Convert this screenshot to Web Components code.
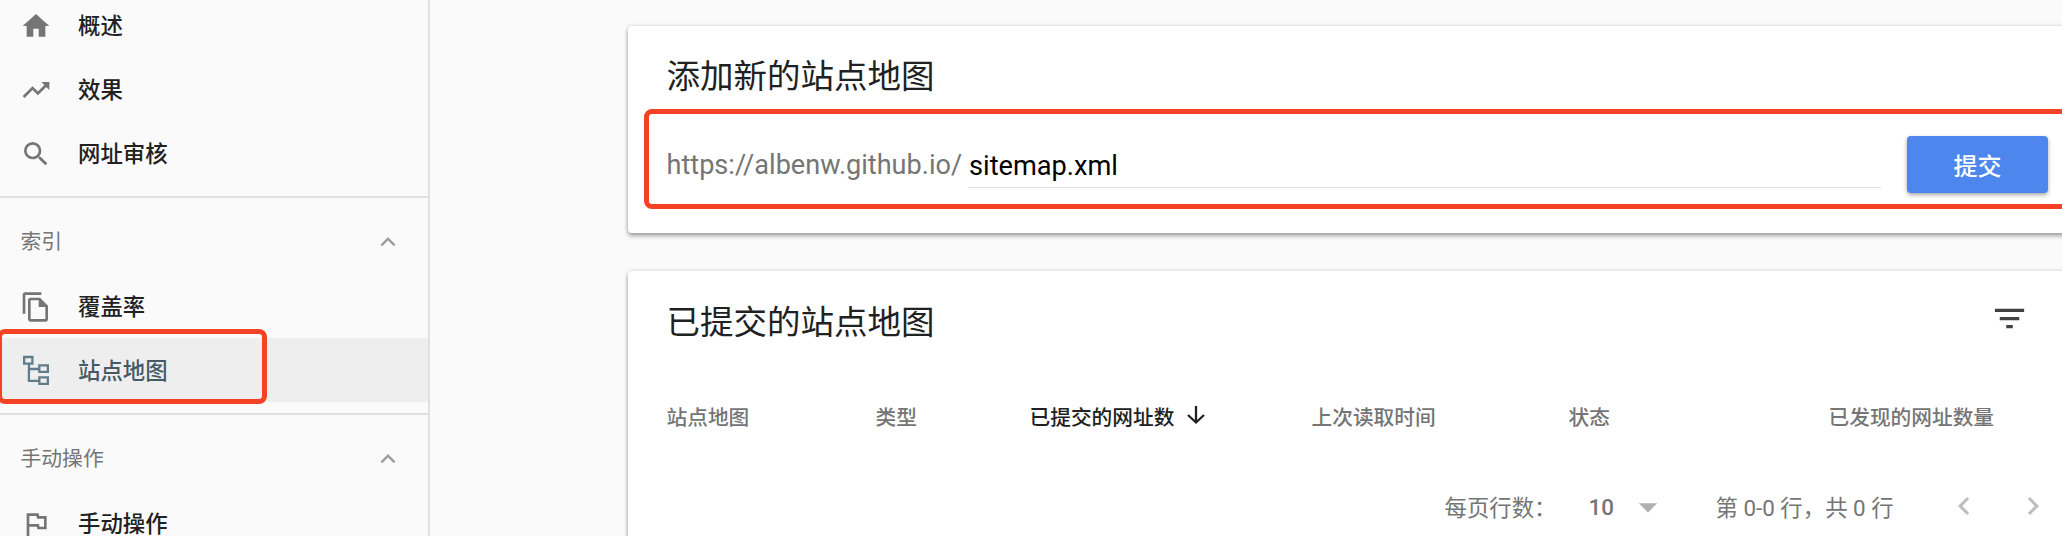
<!DOCTYPE html>
<html lang="zh-CN">
<head>
<meta charset="utf-8">
<title>站点地图</title>
<style>
html, body { margin: 0; height: 100%; overflow: hidden; background: #fafafa; }
body { font-family: Roboto, "Noto Sans CJK SC", sans-serif; color: #212121; }
</style>
</head>
<body>
<console-app></console-app>
<script>
const define = (name, html) => customElements.define(name, class extends HTMLElement {
  constructor() {
    super();
    const t = document.createElement('template');
    t.innerHTML = html;
    this.attachShadow({ mode: 'open' }).append(t.content.cloneNode(true));
  }
});

const ICONS = {
  home: '<path d="M10 20v-6h4v6h5v-8h3L12 3 2 12h3v8z"/>',
  trend: '<path d="M16 6l2.29 2.29-4.88 4.88-4-4L2 16.59 3.41 18l6-6 4 4 6.3-6.29L22 12V6z"/>',
  search: '<path d="M15.5 14h-.79l-.28-.27A6.47 6.47 0 0 0 16 9.5 6.5 6.5 0 1 0 9.5 16c1.61 0 3.09-.59 4.23-1.57l.27.28v.79l5 4.99L20.49 19zm-6 0a4.5 4.5 0 1 1 0-9 4.5 4.5 0 0 1 0 9z"/>',
  copy: '<path d="M16 1H4a2 2 0 0 0-2 2v14h2V3h12zm-1 4H8a2 2 0 0 0-2 2v14c0 1.100.9 2 2 2h11a2 2 0 0 0 2-2V11zM8 21V7h6v5h5v9z"/>',
  tree: '<path d="M3.100 1.500h6.200v5H3.100zM14.500 7.700h6.400v5h-6.400zM14.500 16.700h6.400v5h-6.400zM6.700 6.500v12.900h7.800M6.700 10.500h7.800" fill="none" stroke="currentColor" stroke-width="1.700"/>',
  flag: '<path d="M12.360 6l.4 2H18v6h-3.360l-.4-2H7V6zM14 4H5v17h2v-7h5.600l.4 2h7V6h-5.600z"/>',
  up: '<path d="M12 8l-6 6 1.410 1.410L12 10.830l4.590 4.580L18 14z"/>',
  left: '<path d="M15.410 7.410L14 6l-6 6 6 6 1.410-1.410L10.830 12z"/>',
  right: '<path d="M10 6L8.590 7.410 13.170 12l-4.580 4.590L10 18l6-6z"/>',
  filter: '<path d="M10 18h4v-2h-4zM3 6v2h18V6zm3 7h12v-2H6z"/>',
  down: '<path d="M12 3v16M4 12l8 7.500 8-7.500" fill="none" stroke="currentColor" stroke-width="2.300"/>',
  drop: '<path d="M7 10l5 5 5-5z"/>'
};
customElements.define('ui-icon', class extends HTMLElement {
  constructor() { super(); this.attachShadow({ mode: 'open' }); }
  connectedCallback() {
    this.shadowRoot.innerHTML = `<style>:host{display:block;flex:none;width:32px;height:32px}svg{display:block;width:100%;height:100%;fill:currentColor}</style>
    <svg viewBox="0 0 24 24">${ICONS[this.getAttribute('name')]}</svg>`;
  }
});

define('nav-item', `<style>
  :host { display:flex; align-items:center; height:64px; padding-left:20px; box-sizing:border-box; font-size:22.400px; font-weight:500; line-height:32px; color:#212121; }
  ::slotted(ui-icon) { color:#757575; margin-right:26px; }
  :host([selected]) { background:#eee; color:#455a64; }
  :host([selected]) ::slotted(ui-icon) { color:#607d8b; }
</style><slot name="icon"></slot><slot></slot>`);

define('nav-heading', `<style>
  :host { display:flex; align-items:center; justify-content:space-between; box-sizing:border-box; height:78px; padding:11px 25px 0 20.500px; border-top:2px solid #e0e0e0; font-size:20.800px; line-height:30px; color:#757575; }
  ui-icon { width:30px; height:30px; color:#9e9e9e; }
</style><slot></slot><ui-icon name="up"></ui-icon>`);

define('side-nav', `<style>
  :host { display:flex; flex-direction:column; box-sizing:border-box; width:430px; height:536px; border-right:2px solid #e0e0e0; overflow:hidden; position:relative; }
  .group { flex:none; padding-bottom:10px; }
  .first { margin-top:-6px; }
  .index { padding-bottom:11px; }
  .low { padding-top:2px; }
  .mark { position:absolute; left:-3px; top:329px; width:270px; height:75px; box-sizing:border-box; border:5px solid #f44224; border-radius:8px; }
</style>
<div class="group first">
  <nav-item><ui-icon slot="icon" name="home"></ui-icon>概述</nav-item>
  <nav-item><ui-icon slot="icon" name="trend"></ui-icon>效果</nav-item>
  <nav-item><ui-icon slot="icon" name="search"></ui-icon>网址审核</nav-item>
</div>
<div class="group index">
  <nav-heading>索引</nav-heading>
  <nav-item class="low"><ui-icon slot="icon" name="copy"></ui-icon>覆盖率</nav-item>
  <nav-item class="low" selected><ui-icon slot="icon" name="tree"></ui-icon>站点地图</nav-item>
</div>
<div class="group">
  <nav-heading>手动操作</nav-heading>
  <nav-item class="low"><ui-icon slot="icon" name="flag"></ui-icon>手动操作</nav-item>
</div>
<div class="mark"></div>`);

define('ui-card', `<style>
  :host { display:block; margin-right:-12px; padding-right:12px; background:#fff; border-radius:4px; box-shadow:0 0 4px rgba(0,0,0,.14),0 3px 4px rgba(0,0,0,.32); }
</style><slot></slot>`);

define('card-title', `<style>
  :host { display:block; font-size:33.500px; line-height:48px; color:#212121; white-space:nowrap; }
</style><slot></slot>`);

define('submit-button', `<style>
  :host { display:flex; align-items:center; justify-content:center; width:141px; height:57px; border-radius:4px; background:#4d87ed; color:#fff; font-size:24px; font-weight:500; box-shadow:0 2px 4px rgba(0,0,0,.35); }
</style><slot></slot>`);

define('sitemap-form', `<style>
  :host { display:block; position:relative; height:207px; padding:27px 14px 0 38.500px; box-sizing:border-box; }
  .row { display:flex; margin-top:34.500px; }
  .prefix { width:301px; flex:none; font-size:27.100px; line-height:58px; color:#757575; white-space:nowrap; }
  .field { flex:1; height:52px; box-sizing:border-box; border-bottom:1px solid #e0e0e0; margin-right:26px; font-size:27.200px; line-height:61px; color:#000; }
  .field span { margin-left:1.500px; }
  .mark { position:absolute; left:16px; right:-12px; top:83px; height:100px; box-sizing:border-box; border:5px solid #f44224; border-radius:8px; }
</style>
<card-title>添加新的站点地图</card-title>
<div class="row"><div class="prefix">https://albenw.github.io/</div><div class="field"><span>sitemap.xml</span></div><submit-button>提交</submit-button></div>
<div class="mark"></div>`);

define('table-head', `<style>
  :host { display:grid; grid-template-columns:209px 154px 282px 257px 260px 1fr; align-items:center; height:40px; font-size:20.700px; font-weight:500; color:#757575; white-space:nowrap; }
  .sorted { display:flex; align-items:center; color:#212121; }
  .sorted ui-icon { width:24px; height:24px; margin:-2px 0 0 10px; }
</style>
<span>站点地图</span><span>类型</span><span class="sorted">已提交的网址数<ui-icon name="down"></ui-icon></span><span>上次读取时间</span><span>状态</span><span>已发现的网址数量</span>`);

define('table-pager', `<style>
  :host { display:flex; align-items:center; height:40px; padding-left:778px; font-size:22.400px; color:#757575; white-space:nowrap; }
  span { flex:none; }
  .label, .range { padding-bottom:2px; }
  .label { width:144px; }
  .size { width:37px; font-weight:500; }
  .range { width:231px; margin-left:46px; }
  .drop { width:44px; height:44px; color:#b0b0b0; }
  .nav { color:#bdbdbd; width:36px; height:36px; margin:-2px 34px 0 -1px; }
</style>
<span class="label">每页行数：</span><span class="size">10</span><ui-icon class="drop" name="drop"></ui-icon><span class="range">第 0-0 行，共 0 行</span><ui-icon class="nav" name="left"></ui-icon><ui-icon class="nav" name="right"></ui-icon>`);

define('sitemap-list', `<style>
  :host { display:block; height:320px; padding-left:38.500px; padding-top:28px; box-sizing:border-box; }
  .top { display:flex; justify-content:space-between; padding-right:33px; }
  .top ui-icon { width:39px; height:39px; color:#424242; }
  table-head { margin-top:49px; }
  table-pager { margin-top:51px; }
</style>
<div class="top"><card-title>已提交的站点地图</card-title><ui-icon name="filter"></ui-icon></div>
<table-head></table-head><table-pager></table-pager>`);

define('console-app', `<style>
  :host { display:grid; grid-template-columns:430px minmax(0,1fr); height:536px; overflow:hidden; }
  main { display:grid; grid-template-columns:minmax(0,1fr); align-content:start; gap:38px; padding:26px 0 0 198px; min-width:0; }
</style>
<side-nav></side-nav>
<main><ui-card><sitemap-form></sitemap-form></ui-card><ui-card><sitemap-list></sitemap-list></ui-card></main>`);
</script>
</body>
</html>
